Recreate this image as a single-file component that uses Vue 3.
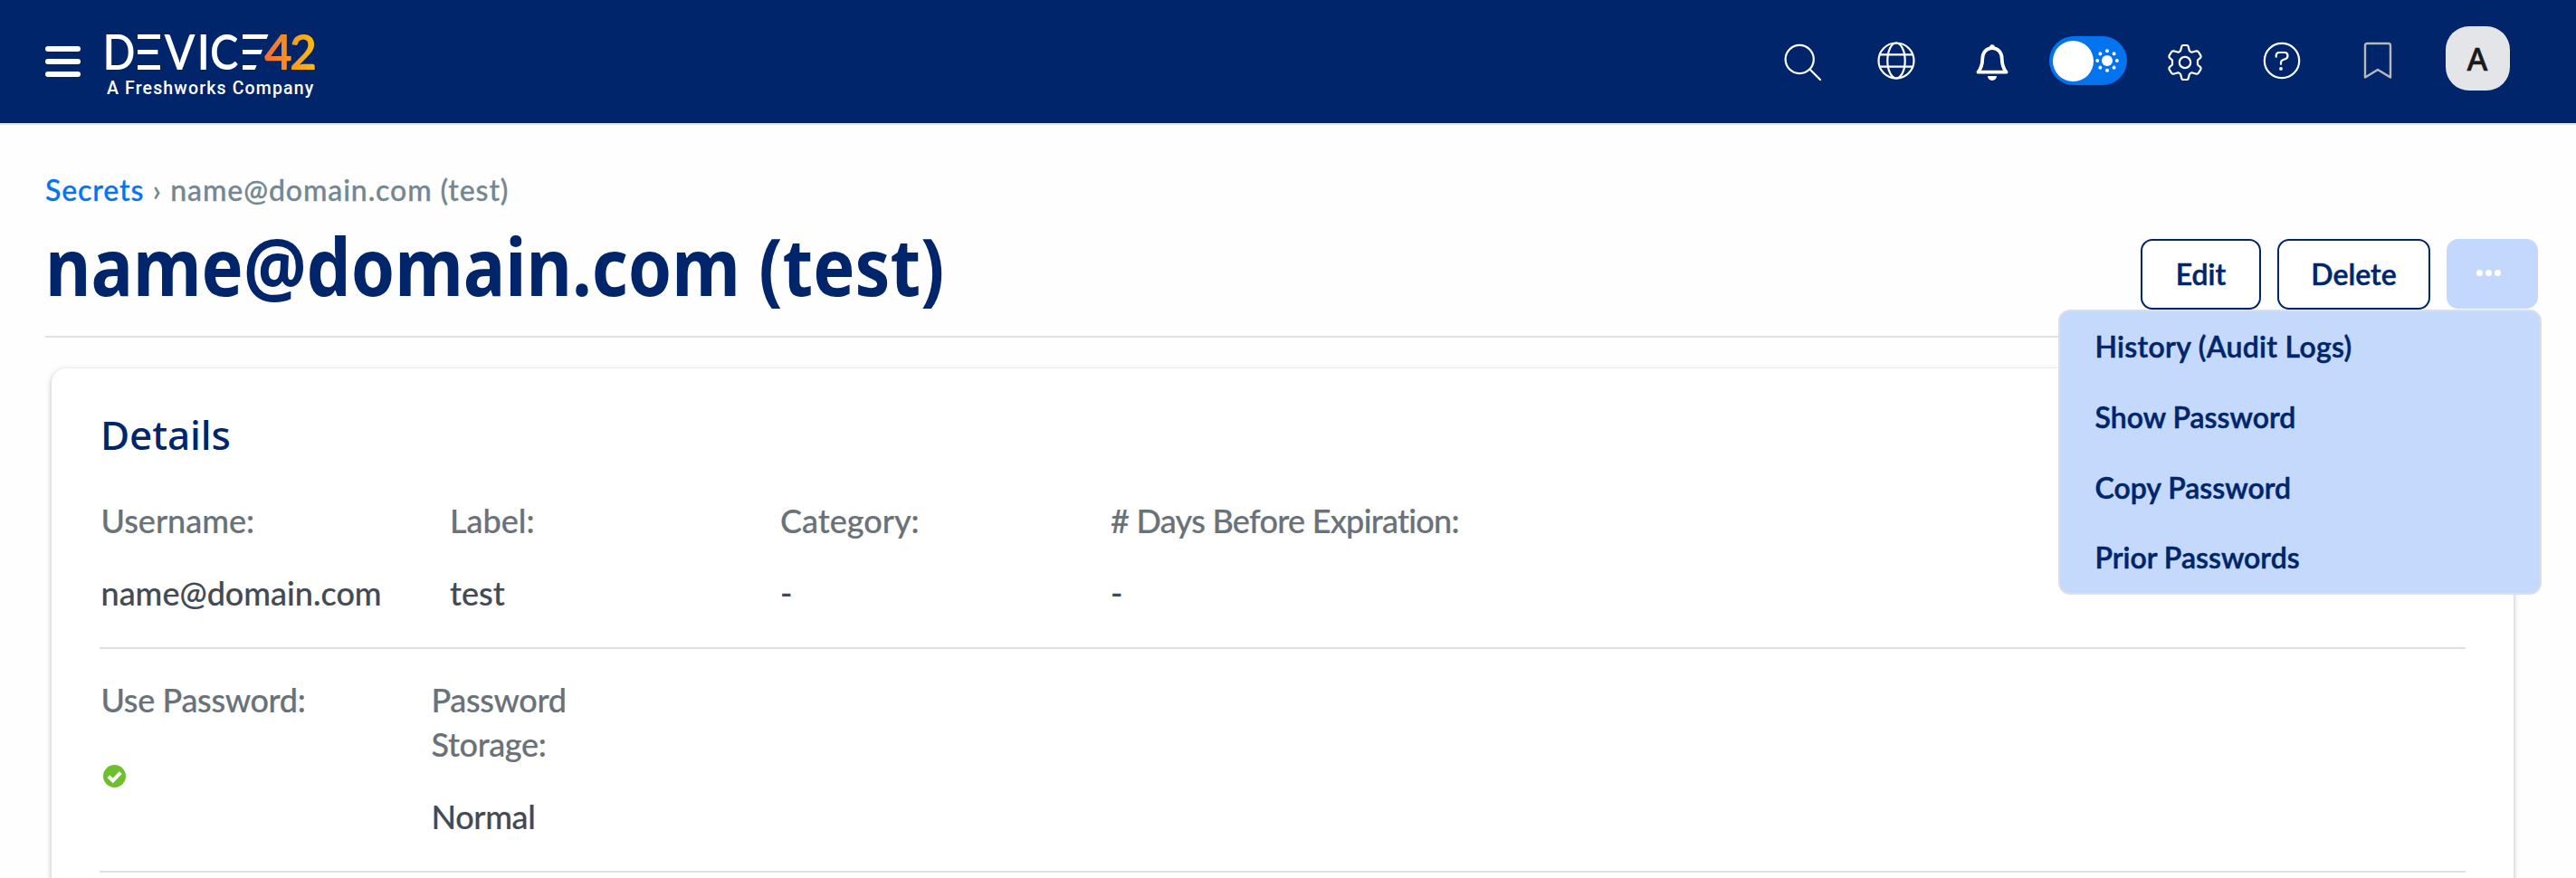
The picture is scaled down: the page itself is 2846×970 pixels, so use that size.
<script setup>
const menu = ['History (Audit Logs)', 'Show Password', 'Copy Password', 'Prior Passwords']
const dots = [0, 45, 90, 135, 180, 225, 270, 315]
const logo = [
  { ch: 'E', x: 134.5, w: 49, clip: 'url(#bars)' },
  { ch: 'E', x: 249, w: 52, clip: 'url(#slant)' },
  { ch: 'D', x: 113.5, w: 36 },
  { ch: 'V', x: 181.5, w: 34 },
  { ch: 'I', x: 217.500, w: 14.5 },
  { ch: 'C', x: 232, w: 31.5 },
]
</script>

<template>
  <div class="app">
    <header class="topbar">
      <button class="burger"><i></i><i></i><i></i></button>
      <div class="brand">
        <svg class="wordmark" width="240" height="46" viewBox="116 34 240 46">
          <defs>
            <linearGradient id="warm" gradientUnits="userSpaceOnUse" x1="292" y1="0" x2="348" y2="0">
              <stop offset="0" stop-color="#f26b35" /><stop offset="1" stop-color="#fdbc0c" />
            </linearGradient>
            <clipPath id="bars"><rect x="152" y="34" width="25" height="46" /></clipPath>
            <clipPath id="slant"><path d="M268 34H298L280.500 80H268Z" /></clipPath>
          </defs>
          <g class="letters">
            <g v-for="l in logo" :key="l.x" :clip-path="l.clip"><text :x="l.x" y="77" :textLength="l.w" lengthAdjust="spacingAndGlyphs">{{ l.ch }}</text></g>
            <text class="num" x="292" y="77" textLength="31" lengthAdjust="spacingAndGlyphs">4</text>
            <text class="num" x="320" y="77" textLength="30" lengthAdjust="spacingAndGlyphs">2</text>
          </g>
        </svg>
        <span class="tagline">A Freshworks Company</span>
      </div>
      <nav class="tools">
        <svg class="search" width="42" height="42" viewBox="0 0 42 42"><circle cx="17.200" cy="17.500" r="15.600" /><path d="M28.500 28.500 40 40" /></svg>
        <svg class="globe" width="42" height="42" viewBox="0 0 42 42"><circle cx="21" cy="21" r="19.500" /><ellipse cx="21" cy="21" rx="9.700" ry="19.500" /><path d="M3 14.300H39M3 27.700H39" /></svg>
        <svg class="bell" width="36" height="42" viewBox="0 0 36 42"><path d="M2.500 31.700C6 27 7.200 24 7.200 17.500C7.200 10 11.500 5.200 18 5.200S28.800 10 28.800 17.500C28.800 24 30 27 33.500 31.700Z" /><path class="solid" d="M15.200 5.500V4a2.800 2.800 0 0 1 5.600 0v1.500ZM13 36h10a5 5 0 0 1-10 0Z" /></svg>
        <span class="toggle">
          <span class="knob"></span>
          <svg width="28" height="28" viewBox="-14 -14 28 28"><circle r="6" /><circle v-for="a in dots" :key="a" cx="10.800" cy="0" r="2" :transform="`rotate(${a})`" /></svg>
        </span>
        <svg class="gear" width="42" height="42" viewBox="-21 -21 42 42"><circle r="6.200" /><path d="M-4 -16.500Q-3.600 -19 -2 -19H2Q3.600 -19 4 -16.500L4.800 -13.300Q5.600 -11.700 7.500 -11.200L12.700 -12.700Q14.200 -12.900 15 -11.500L17.400 -7.600Q18.100 -6.200 17 -5.100L14 -2.500V2.500L17 5.100Q18.100 6.200 17.400 7.600L15 11.500Q14.200 12.900 12.700 12.700L7.500 11.200Q5.600 11.700 4.800 13.300L4 16.500Q3.600 19 2 19H-2Q-3.600 19 -4 16.500L-4.800 13.300Q-5.600 11.700 -7.500 11.200L-12.700 12.700Q-14.200 12.900 -15 11.500L-17.400 7.600Q-18.100 6.200 -17 5.100L-14 2.500V-2.500L-17 -5.100Q-18.100 -6.200 -17.400 -7.600L-15 -11.500Q-14.200 -12.900 -12.700 -12.700L-7.500 -11.200Q-5.600 -11.700 -4.800 -13.300Z" /></svg>
        <svg class="help" width="42" height="42" viewBox="-21 -21 42 42"><circle r="19.200" /><path d="M-6.300 -4.300V-5.500Q-6.300 -9 -2.800 -9H3Q6.500 -9 6.500 -5.500Q6.500 -2.700 3.800 -1.800L1 -.8Q-1 0 -1 2V3.800" /><circle class="solid" cx="-1" cy="8.900" r="1.900" /></svg>
        <svg class="bookmark" width="32" height="42" viewBox="0 0 32 42"><path d="M2 39.500V4.500Q2 2 4.500 2H27.500Q30 2 30 4.500V39.500L16 31Z" /></svg>
        <span class="avatar">A</span>
      </nav>
    </header>

    <main class="page">
      <div class="crumbs"><a>Secrets</a><span class="sep">›</span><span>name@domain.com (test)</span></div>
      <div class="heading">
        <h1>name@domain.com (test)</h1>
        <div class="actions">
          <button class="edit">Edit</button>
          <button class="delete">Delete</button>
          <button class="more"><i></i><i></i><i></i></button>
          <ul class="menu"><li v-for="m in menu" :key="m">{{ m }}</li></ul>
        </div>
      </div>

      <section class="card">
        <h2>Details</h2>
        <div class="row">
          <dl class="wide"><dt>Username:</dt><dd>name@domain.com</dd></dl>
          <dl><dt>Label:</dt><dd>test</dd></dl>
          <dl><dt>Category:</dt><dd>-</dd></dl>
          <dl class="long"><dt># Days Before Expiration:</dt><dd>-</dd></dl>
        </div>
        <div class="row flags">
          <dl><dt>Use Password:</dt><dd class="state"><svg width="25" height="25" viewBox="0 0 25 25"><circle cx="12.500" cy="12.500" r="12.500" /><path d="M5.800 12.800 10.800 17.500 19.200 8.700" /></svg></dd></dl>
          <dl><dt>Password<br />Storage:</dt><dd>Normal</dd></dl>
        </div>
      </section>
    </main>
  </div>
</template>

<style>
body { margin: 0; background: #fefefe; overflow: hidden; }
</style>

<style scoped>
.app { height: 970px; overflow: hidden; font-family: Lato, "Liberation Sans", sans-serif; color: #00256a; }
button { padding: 0; margin: 0; border: 0; background: none; font: inherit; color: inherit; box-sizing: border-box; }
h1, h2, dl, dd, dt, ul { margin: 0; padding: 0; }
svg { display: block; flex: none; }

.topbar { display: flex; align-items: flex-start; height: 136px; padding: 0 73px 0 50px; background: #00256a; border-bottom: 2px solid #dfe1e5; }
.burger { display: flex; flex-direction: column; gap: 8.500px; width: 39px; margin-top: 51px; }
.burger i { height: 5.500px; border-radius: 3px; background: #fff; }
.brand { display: flex; flex-direction: column; margin: 34px 0 0 27px; width: 240px; }
.wordmark { overflow: visible; }
.letters { font: 600 54px Lato, sans-serif; fill: #fff; }
.letters .num { fill: url(#warm); font-weight: 700; }
.tagline { margin-top: 4.500px; padding-left: 2px; font: 500 19.500px/26px Roboto, sans-serif; letter-spacing: 1.150px; color: #fff; white-space: nowrap; }

.tools { display: flex; flex: 1; justify-content: flex-end; align-items: flex-start; }
.tools > svg { fill: none; stroke: #fff; stroke-width: 2.200; stroke-linecap: round; stroke-linejoin: round; }
.tools > svg .solid { fill: #fff; stroke: none; }
.tools .search { margin: 47.500px 61px 0 0; }
.tools .globe { margin: 46px 67px 0 0; }
.tools .bell { margin: 48px 45px 0 0; stroke-width: 3.800; }
.toggle { display: flex; align-items: center; box-sizing: border-box; width: 86px; height: 54px; margin: 40px 43px 0 0; padding-left: 4px; border-radius: 27px; background: #0473ee; }
.knob { width: 45px; height: 45px; border-radius: 50%; background: #fff; }
.toggle svg { margin-left: 1.500px; fill: #fff; }
.tools .gear { margin: 48px 65px 0 0; }
.tools .help { margin: 46px 69.500px 0 0; }
.tools .bookmark { margin: 46px 59px 0 0; stroke: #b8b8b9; stroke-width: 2.400; }
.avatar { width: 71px; height: 71px; margin-top: 29px; border-radius: 26px; background: #e4e5e9; color: #1a1a1a; font: 500 35px/71px "Noto Sans", sans-serif; text-align: center; -webkit-text-stroke: .5px #1a1a1a; text-indent: -1px; }

.page { padding: 48px 40px 0 50px; }
.crumbs { display: flex; height: 48px; font-size: 32px; line-height: 48px; font-weight: 500; letter-spacing: .9px; color: #738792; white-space: nowrap; -webkit-text-stroke: .3px; }
.crumbs a { color: #0474f0; }
.crumbs .sep { width: 29px; text-align: center; }
.heading { display: flex; justify-content: space-between; height: 128px; margin-top: 9px; border-bottom: 2px solid #dee1e5; }
h1 { font: 700 87px/100px "Noto Sans", "Open Sans", sans-serif; transform: scaleX(.892); transform-origin: 0 0; white-space: nowrap; }
.actions { position: relative; display: flex; height: 78px; margin: 21px 2px 0 0; font-size: 32px; font-weight: 600; -webkit-text-stroke: .5px; }
.edit, .delete { width: 133px; height: 78px; padding-bottom: 1px; border: 2px solid #00256a; border-radius: 13px; background: #fff; }
.delete { width: 169px; margin-left: 18px; }
.more { display: flex; justify-content: center; align-items: center; gap: 2.700px; width: 101px; height: 77px; margin-left: 18px; padding: 0 8px 2px 0; border-radius: 13px; background: #c4d8fd; }
.more i { width: 7px; height: 7px; border-radius: 50%; background: #fff; }
.menu { position: absolute; top: 78px; right: -4px; z-index: 2; box-sizing: border-box; width: 534px; height: 315px; border: 2px solid #dcdfe5; border-radius: 13px; background: #c5d9fd; list-style: none; }
.menu li { height: 77.750px; padding-left: 38.500px; line-height: 77px; white-space: nowrap; }
.menu li:first-child { letter-spacing: .3px; }

.card { width: 2614px; height: 700px; margin: 34px 0 0 7px; padding: 43px 53px 0; border-radius: 16px; background: #fff; box-shadow: 0 2px 6px rgba(0, 0, 0, .28); }
h2 { margin-bottom: 9px; padding-left: 1px; font: 500 44px/60px "Noto Sans", sans-serif; letter-spacing: -.1px; }
.row { display: flex; padding: 32px 1px 35px 1.500px; border-bottom: 2px solid #dce1e5; font-size: 36px; line-height: 49px; font-weight: 500; -webkit-text-stroke: .2px; }
dl { width: 365px; white-space: nowrap; }
dl.wide { width: 385.500px; }
dl.long dt { letter-spacing: -.720px; }
.flags dl { letter-spacing: -.350px; }
dt { margin-bottom: 31px; color: #697179; }
dd { color: #444a53; }
.state { padding: 16px 0 0 2px; }
.state svg { fill: #6dbf2c; -webkit-text-stroke: 0; }
.state path { fill: none; stroke: #fff; stroke-width: 4; }
</style>
